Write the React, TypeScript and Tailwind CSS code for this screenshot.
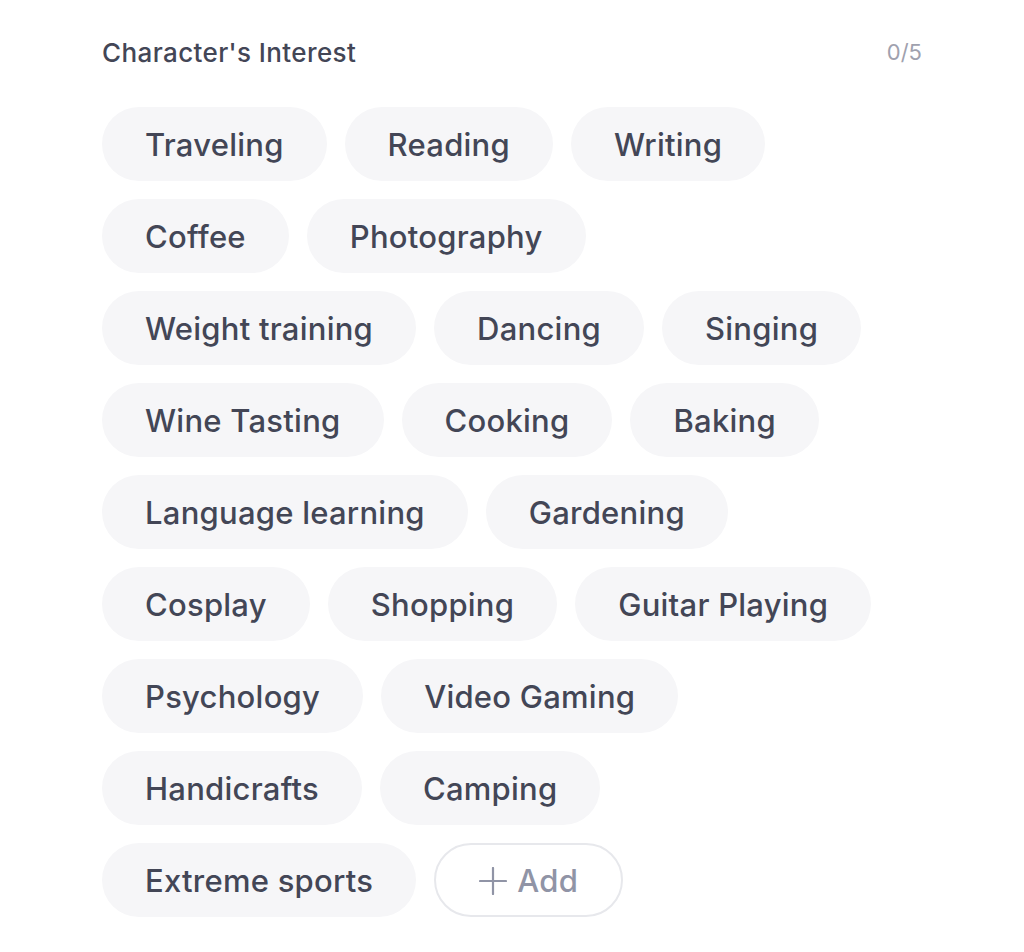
const ROWS: string[][] = [
  ['Traveling', 'Reading', 'Writing'],
  ['Coffee', 'Photography'],
  ['Weight training', 'Dancing', 'Singing'],
  ['Wine Tasting', 'Cooking', 'Baking'],
  ['Language learning', 'Gardening'],
  ['Cosplay', 'Shopping', 'Guitar Playing'],
  ['Psychology', 'Video Gaming'],
  ['Handicrafts', 'Camping'],
  ['Extreme sports'],
];

const CHIP = 'flex h-[74px] items-center rounded-full px-[43px] pt-[2px] text-[31px] font-medium tracking-[0.008em]';

function PlusIcon() {
  return (
    <svg width="28" height="28" viewBox="0 0 28 28" fill="none" stroke="currentColor" strokeWidth="2.2" strokeLinecap="round">
      <path d="M14 1v26M1 14h26" />
    </svg>
  );
}

export default function App() {
  return (
    <div className="min-h-[952px] w-[1024px] bg-white font-['Inter',sans-serif]">
      <div className="ml-[102px] w-[820px] pt-[34px]">
        <div className="flex h-[36px] items-center justify-between">
          <h2 className="text-[26px] font-medium tracking-[0.015em] text-[#434656]">Character's Interest</h2>
          <span className="text-[22px] text-[#9fa1ae]">0/5</span>
        </div>
        <div className="mt-[37px] flex flex-col gap-[18px]">
          {ROWS.map((row, i) => (
            <div key={i} className="flex gap-[18px]">
              {row.map((label) => (
                <button key={label} type="button" className={`${CHIP} bg-[#f6f6f8] text-[#434656]`}>
                  {label}
                </button>
              ))}
              {i === ROWS.length - 1 && (
                <button
                  type="button"
                  className={`${CHIP} gap-[10px] border-2 border-[#e7e8ec] bg-white text-[#9094a6]`}
                >
                  <PlusIcon />
                  Add
                </button>
              )}
            </div>
          ))}
        </div>
      </div>
    </div>
  );
}
